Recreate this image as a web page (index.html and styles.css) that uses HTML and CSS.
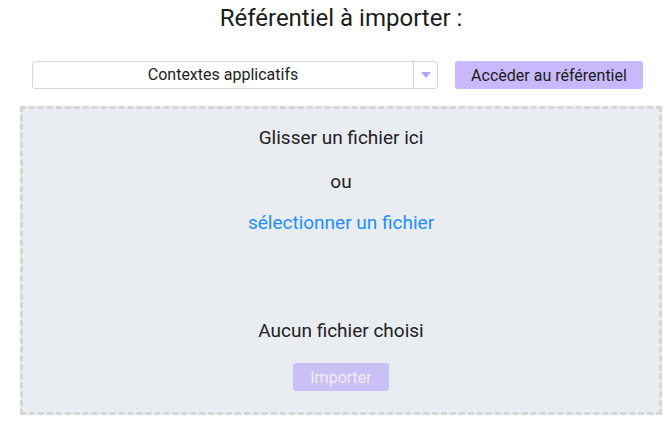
FILE: index.html
```html
<!DOCTYPE html>
<html lang="fr">
<head>
<meta charset="utf-8">
<link rel="stylesheet" href="styles.css">
</head>
<body>
<div class="page">
  <h1 class="title">Référentiel à importer :</h1>
  <div class="toolbar">
    <div class="select">
      <span class="select-value">Contextes applicatifs</span>
      <span class="select-arrow"><svg width="10" height="6" viewBox="0 0 10 6"><path d="M0 0h10L5 6z" fill="#b3a3f5"/></svg></span>
    </div>
    <button class="btn">Accèder au référentiel</button>
  </div>
  <div class="dropzone">
    <div class="line drop-text">Glisser un fichier ici</div>
    <div class="line or">ou</div>
    <a class="line link">sélectionner un fichier</a>
    <div class="line none">Aucun fichier choisi</div>
    <button class="btn btn-disabled">Importer</button>
  </div>
</div>
</body>
</html>
```
FILE: styles.css
```css
* { box-sizing: border-box; }
body {
  margin: 0;
  background: #ffffff;
  font-family: Roboto, "Liberation Sans", sans-serif;
  color: #222222;
}
.page {
  width: 642px;
  margin-left: 20px;
}
.title {
  margin: 0;
  padding-top: 4px;
  height: 61px;
  font-size: 24px;
  font-weight: 400;
  line-height: 28px;
  text-align: center;
  color: #1c1c1c;
}
.toolbar {
  display: flex;
  align-items: center;
  padding-left: 12px;
  height: 28px;
  gap: 17px;
}
.select {
  width: 406px;
  height: 28px;
  display: flex;
  border: 1px solid #d8d8d8;
  border-radius: 3px;
  background: #fff;
}
.select-value {
  flex: 1;
  text-align: center;
  font-size: 16px;
  line-height: 26px;
  color: #222;
  border-right: 1px solid #d8d8d8;
}
.select-arrow {
  width: 23px;
  display: flex;
  align-items: center;
  justify-content: center;
}
.btn {
  height: 28px;
  border: 0;
  border-radius: 3px;
  background: #c7b9fb;
  font-family: Roboto, "Liberation Sans", sans-serif;
  font-size: 16px;
  color: #1c1c1c;
  padding: 0;
  width: 188px;
}
.dropzone {
  margin-top: 17px;
  height: 309px;
  border: 3px dashed #d6d6d6;
  background: #e9ecf1;
  display: flex;
  flex-direction: column;
  align-items: center;
  padding-top: 17px;
}
.line {
  font-size: 19px;
  line-height: 24px;
  color: #222;
}
.or { margin-top: 20px; }
.link {
  margin-top: 17px;
  color: #1e8fff;
  cursor: pointer;
}
.none { margin-top: 84px; }
.btn-disabled {
  margin-top: 20px;
  width: 96px;
  background: #cbc0f6;
  color: #f1eefc;
  font-size: 16px;
}
```
